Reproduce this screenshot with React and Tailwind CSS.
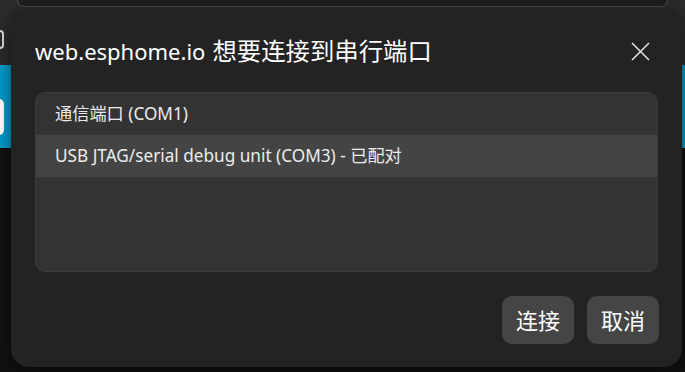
const font = { fontFamily: '"Noto Sans", "Noto Sans CJK SC", sans-serif' };

function Backdrop() {
  return (
    <div className="flex h-full flex-col">
      <div className="relative h-[65px] bg-[#2b2b2b]">
        <div className="mx-[17px] h-[7px] rounded-b-[10px] border-x border-b border-[#4a4a4a] bg-[#1f1f1f]" />
        <div className="ml-[-14px] mt-[23px] h-[19px] w-[18px] rounded-[4px] border-2 border-[#d8d8d8]" />
      </div>
      <div className="h-[83px] bg-[#009ac9] pt-[34px]">
        <div className="ml-[-14px] h-[36px] w-[18px] rounded-[5px] bg-white" />
      </div>
      <div className="flex-1 bg-[#111111]" />
    </div>
  );
}

function CloseIcon() {
  return (
    <svg width="19" height="19" viewBox="0 0 19 19" fill="none" stroke="#e6e6e6" strokeWidth="1.5">
      <path d="M1 1 L18 18 M18 1 L1 18" />
    </svg>
  );
}

export default function App() {
  const ports = [
    { label: '通信端口 (COM1)', active: false },
    { label: 'USB JTAG/serial debug unit (COM3) - 已配对', active: true },
  ];

  return (
    <div className="relative h-[372px] w-[685px] overflow-hidden" style={font}>
      <Backdrop />

      <div className="absolute left-[11px] top-[8px] flex h-[359px] w-[671px] flex-col rounded-[18px] bg-[#232323] shadow-[0_4px_16px_rgba(0,0,0,0.5)]">
        <div className="flex h-[84px] items-center justify-between pl-[24px] pr-[32px] pt-[2px]">
          <h1 className="flex items-baseline leading-none text-white">
            <span className="text-[22px]">web.esphome.io</span>
            <span className="ml-[7px] text-[24.4px]">想要连接到串行端口</span>
          </h1>
          <CloseIcon />
        </div>

        <div className="mx-[24px] h-[180px] overflow-hidden rounded-[10px] border border-[#3b3b3b] bg-[#333333]">
          {ports.map((p) => (
            <div
              key={p.label}
              className={`flex h-[42px] items-center px-[19px] text-[17.2px] text-[#ececec] ${p.active ? 'bg-[#444444]' : ''}`}
            >
              {p.label}
            </div>
          ))}
        </div>

        <div className="mt-[24px] flex justify-end gap-[13px] pr-[23px]">
          <button className="h-[48px] w-[72px] rounded-[10px] bg-[#454545] text-[22px] text-white">连接</button>
          <button className="h-[48px] w-[72px] rounded-[10px] bg-[#454545] text-[22px] text-white">取消</button>
        </div>
      </div>
    </div>
  );
}
